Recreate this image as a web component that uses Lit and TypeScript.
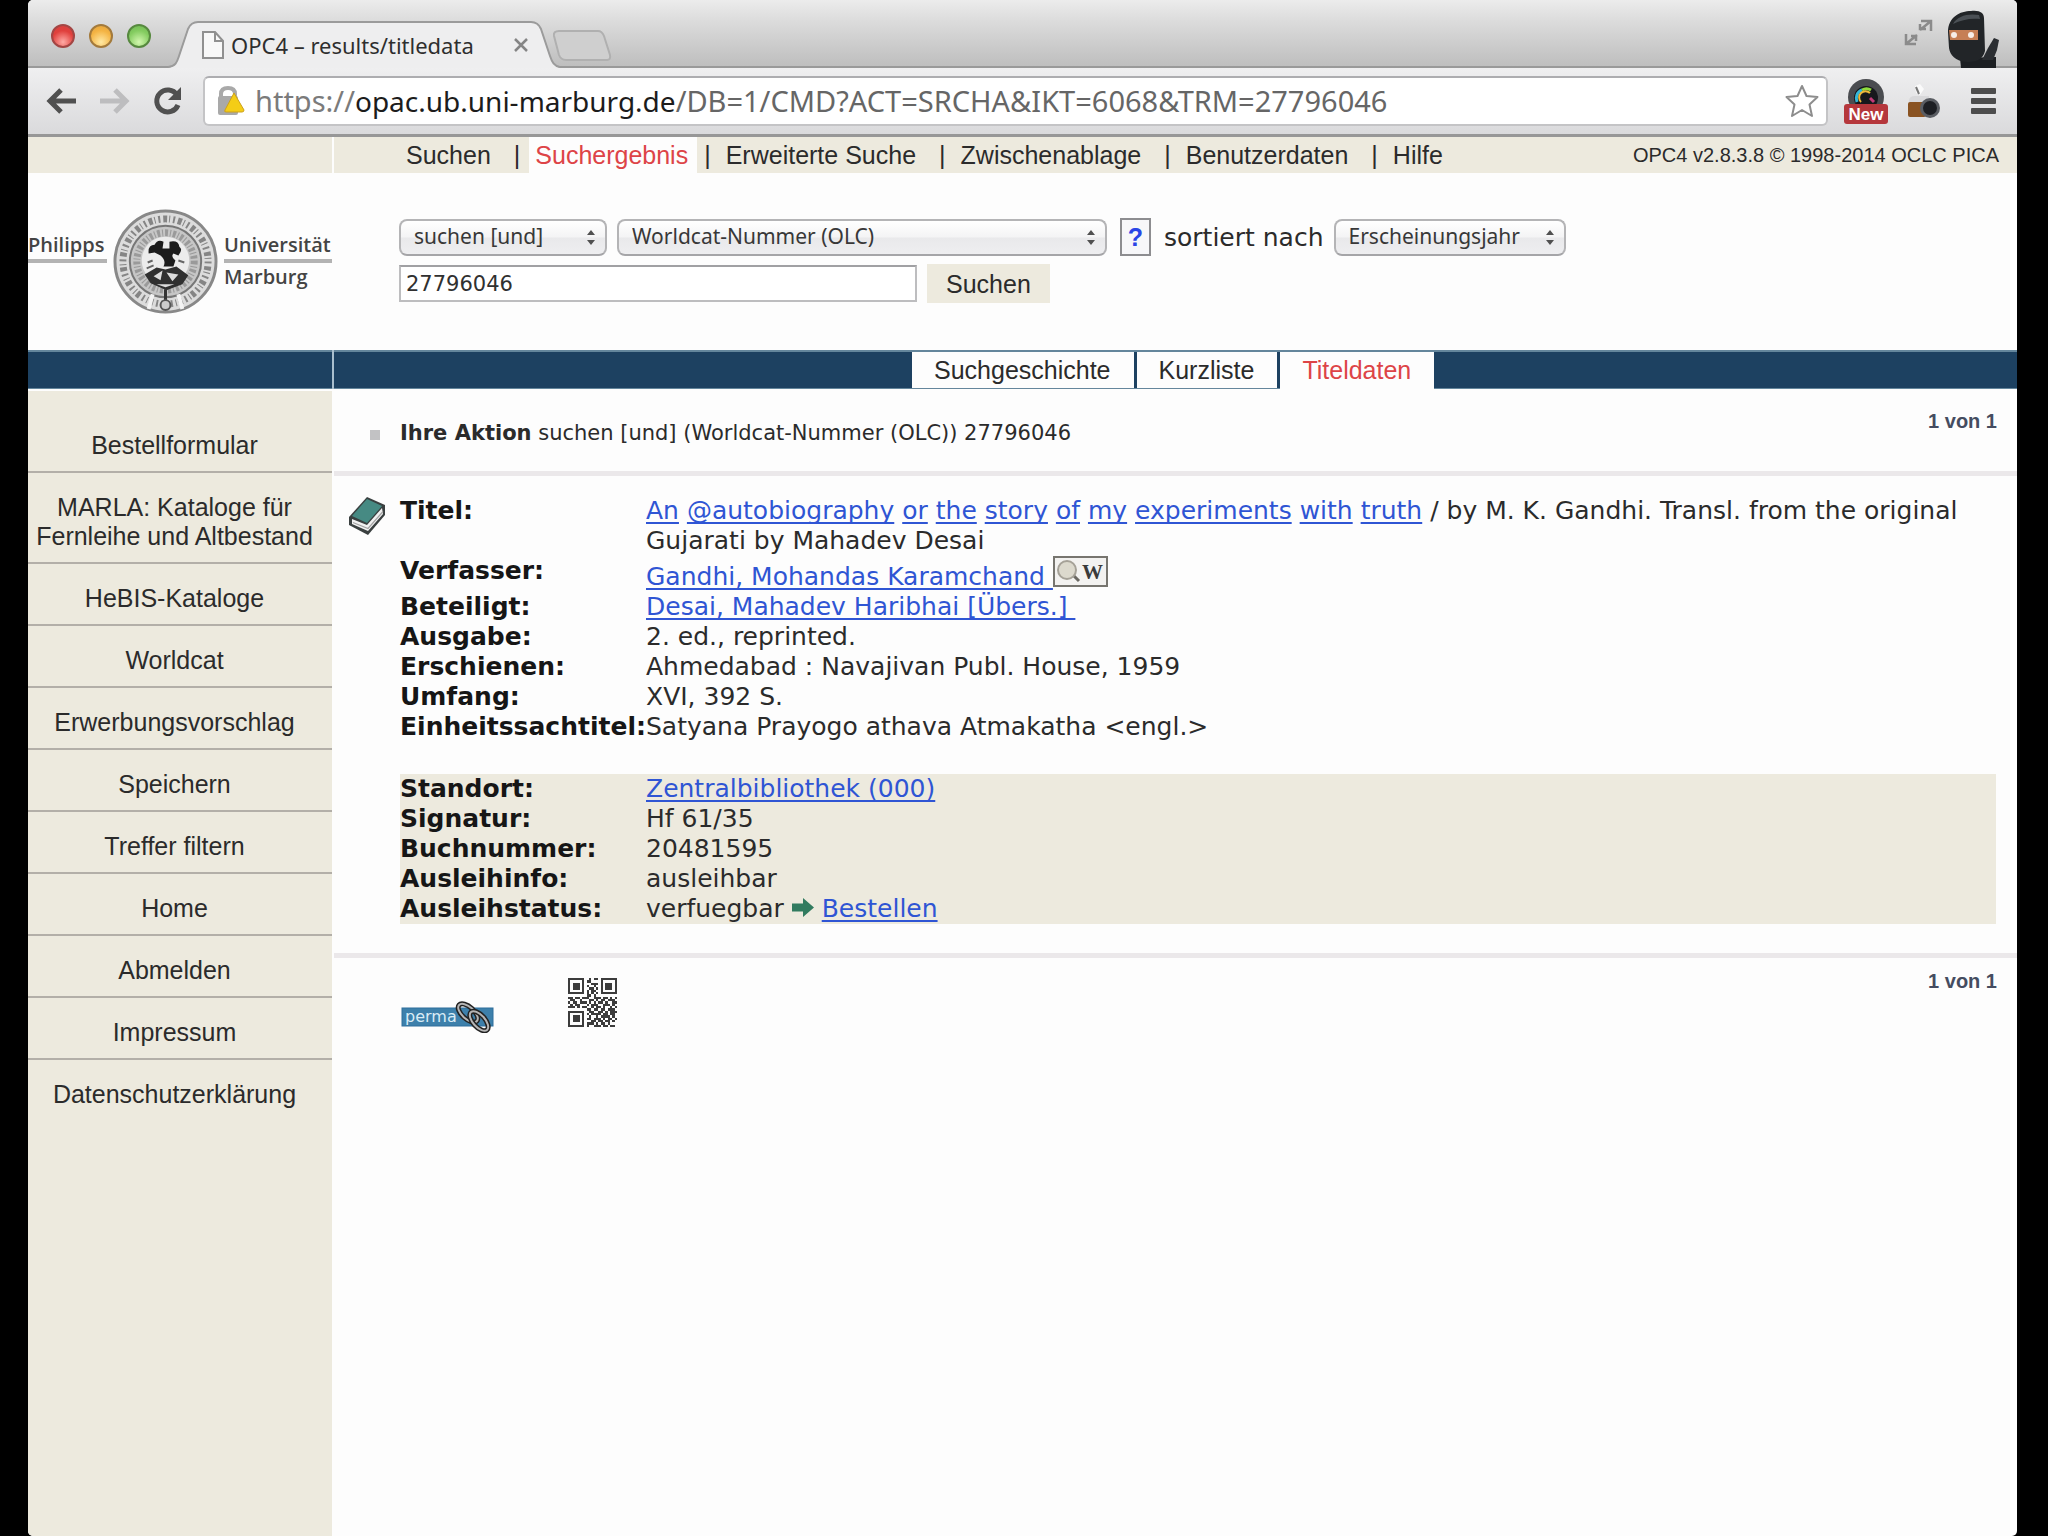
import { LitElement, html, css, svg, nothing } from "lit";
import { customElement, property } from "lit/decorators.js";
import { classMap } from "lit/directives/class-map.js";

interface Field {
  label: string;
  value: unknown;
}

const NAV = ["Suchen", "Suchergebnis", "Erweiterte Suche", "Zwischenablage", "Benutzerdaten", "Hilfe"];
const TABS = ["Suchgeschichte", "Kurzliste", "Titeldaten"];
const SIDE = [
  "Bestellformular",
  "MARLA: Kataloge für Fernleihe und Altbestand",
  "HeBIS-Kataloge",
  "Worldcat",
  "Erwerbungsvorschlag",
  "Speichern",
  "Treffer filtern",
  "Home",
  "Abmelden",
  "Impressum",
  "Datenschutzerklärung",
];
const TITLE_WORDS = ["An", "@autobiography", "or", "the", "story", "of", "my", "experiments", "with", "truth"];

const QR_ROWS = [
  "111111100101101111111",
  "100000101100001000001",
  "101110100011101011101",
  "101110101001001011101",
  "101110100110101011101",
  "100000101011001000001",
  "111111101010101111111",
  "000000001101000000000",
  "110110111001110110101",
  "011001000110101101110",
  "101101110101011010011",
  "010110001011100111010",
  "111010110010110100101",
  "000000001101101101110",
  "111111100110011010111",
  "100000101011110110110",
  "101110100100101111010",
  "101110101101110101101",
  "101110100011011011010",
  "100000101110101101000",
  "111111101001110110110",
];

const bookIcon = svg`<svg class="book" viewBox="0 0 38 40" aria-hidden="true">
  <path d="M1 21 L19 1 L37 9 L37 19 L20 39 L1 29 Z" fill="#3a4040"/>
  <path d="M4 23 L19 29 L34 12 L35 18 L20 35 L4 28 Z" fill="#f1f1f1"/>
  <path d="M5 26.500 L20 32.500 L35 15.500" fill="none" stroke="#a4a4a4" stroke-width="1.200"/>
  <path d="M4 20 L19 3 L34 10 L19 27 Z" fill="#468a83"/>
</svg>`;

const wikiIcon = svg`<svg class="wiki" viewBox="0 0 55 31" role="img" aria-label="Wikipedia">
  <rect x="1" y="1" width="53" height="29" fill="#f3f2f0" stroke="#77756f" stroke-width="2"/>
  <path d="M20 19 L26 25" stroke="#6b6862" stroke-width="3"/>
  <circle cx="14" cy="14" r="9" fill="#dcd9cd" stroke="#a5a197" stroke-width="2"/>
  <text x="29" y="23" font-family="Liberation Serif, serif" font-weight="bold" font-size="21" fill="#3a3a3a">W</text>
</svg>`;

const arrowIcon = svg`<svg class="arrow" viewBox="0 0 22 19" aria-hidden="true">
  <path d="M0 5.500 H11 V0 L22 9.500 L11 19 V13.500 H0 Z" fill="#317b5f"/>
</svg>`;

const RECORD: Field[] = [
  {
    label: "Titel:",
    value: html`${TITLE_WORDS.map((w) => html`<a href="#titel">${w}</a> `)}/ by M. K. Gandhi. Transl. from the
      original Gujarati by Mahadev Desai`,
  },
  {
    label: "Verfasser:",
    value: html`<span class="tall"><a href="#verfasser">Gandhi, Mohandas Karamchand&nbsp;</a>${wikiIcon}</span>`,
  },
  { label: "Beteiligt:", value: html`<a href="#beteiligt">Desai, Mahadev Haribhai [Übers.]&nbsp;</a>` },
  { label: "Ausgabe:", value: "2. ed., reprinted." },
  { label: "Erschienen:", value: "Ahmedabad : Navajivan Publ. House, 1959" },
  { label: "Umfang:", value: "XVI, 392 S." },
  { label: "Einheitssachtitel:", value: "Satyana Prayogo athava Atmakatha <engl.>" },
];

const HOLDINGS: Field[] = [
  { label: "Standort:", value: html`<a href="#standort">Zentralbibliothek (000)</a>` },
  { label: "Signatur:", value: "Hf 61/35" },
  { label: "Buchnummer:", value: "20481595" },
  { label: "Ausleihinfo:", value: "ausleihbar" },
  { label: "Ausleihstatus:", value: html`verfuegbar ${arrowIcon} <a href="#bestellen">Bestellen</a>` },
];

/* Window frame: tab strip and toolbar */
@customElement("browser-chrome")
class BrowserChrome extends LitElement {
  static styles = css`
    :host {
      display: block;
      font-family: "Noto Sans", "Liberation Sans", sans-serif;
    }
    button {
      display: block;
      padding: 0;
      border: 0;
      background: none;
    }
    svg {
      display: block;
    }
    .strip {
      display: flex;
      align-items: flex-end;
      height: 68px;
      padding: 0 15px 0 23px;
      box-sizing: border-box;
      background: linear-gradient(#ececec, #dcdcdc 30%, #bdbdbd);
      box-shadow: inset 0 -2px #999;
    }
    .lights {
      display: flex;
      align-self: flex-start;
      gap: 14px;
      padding-top: 24px;
      margin-right: 17px;
    }
    .light {
      width: 24px;
      height: 24px;
      border-radius: 50%;
      border: 2px solid;
      box-sizing: border-box;
    }
    .red {
      background: radial-gradient(circle at 50% 80%, #ffaaa5, #e0403c 60%, #d5403f);
      border-color: #a34644;
    }
    .yellow {
      background: radial-gradient(circle at 50% 80%, #ffe9a4, #f4b444 60%, #e3a13a);
      border-color: #a37a3c;
    }
    .green {
      background: radial-gradient(circle at 50% 80%, #d2f7ae, #84cc60 60%, #6fb852);
      border-color: #57893f;
    }
    .tab {
      position: relative;
      display: flex;
      align-items: center;
      width: 392px;
      height: 48px;
      padding: 2px 32px 0 34px;
      box-sizing: border-box;
    }
    .shape {
      position: absolute;
      inset: 0;
      width: 100%;
      height: 100%;
    }
    .title {
      position: relative;
      flex: 1;
      margin-left: 7px;
      font-size: 22px;
      line-height: 30px;
      color: #2e2e2e;
      white-space: nowrap;
    }
    .doc,
    .close {
      position: relative;
    }
    .new {
      margin: 0 auto 6px -8px;
    }
    .expand {
      margin: 0 13px 22px 0;
    }
    .toolbar {
      display: flex;
      align-items: center;
      height: 69px;
      padding: 0 21px 0 18px;
      box-sizing: border-box;
      background: linear-gradient(#efeff0, #dadadc);
      border-bottom: 3px solid #979797;
    }
    .nav {
      display: flex;
      gap: 22px;
      margin-right: 20px;
    }
    .address {
      flex: 1;
      display: flex;
      align-items: center;
      gap: 10px;
      height: 50px;
      padding: 0 6px 0 12px;
      box-sizing: border-box;
      border: 2px solid #c4c4c6;
      border-top-color: #adadb0;
      border-radius: 6px;
      background: #fff;
      font-size: 29px;
      line-height: 40px;
      color: #7b7b7b;
      white-space: nowrap;
    }
    .url {
      flex: 1;
    }
    .host {
      font-size: 28px;
      color: #1c1c1c;
    }
    .path {
      color: #666;
    }
    .extensions {
      display: flex;
      align-items: center;
      margin-left: 15px;
    }
    .camera {
      margin: 0 30px 0 18px;
    }
  `;

  render() {
    return html`
      <div class="strip">
        <div class="lights">
          <button class="light red" aria-label="Schließen"></button>
          <button class="light yellow" aria-label="Minimieren"></button>
          <button class="light green" aria-label="Maximieren"></button>
        </div>
        <div class="tab">
          <svg class="shape" viewBox="0 0 392 48" preserveAspectRatio="none">
            <path d="M0 48 C8 46 9 42 11 36 L20 9 Q23 2 30 2 H363 Q370 2 373 9 L382 36 C384 42 386 46 392 48 Z" fill="#eeeeef" />
            <path
              d="M0 47 C8 46 9 42 11 36 L20 9 Q23 2 30 2 H363 Q370 2 373 9 L382 36 C384 42 386 46 392 47"
              fill="none"
              stroke="#9b9b9b"
              stroke-width="2"
            />
          </svg>
          <svg class="doc" width="22" height="28" viewBox="0 0 22 28">
            <path d="M1 1 H13 L21 10 V27 H1 Z" fill="#f8f8f8" stroke="#909090" stroke-width="2" />
            <path d="M13 1 V10 H21" fill="none" stroke="#909090" stroke-width="2" />
          </svg>
          <span class="title">OPC4 – results/titledata</span>
          <button class="close" aria-label="Tab schließen">
            <svg width="14" height="14" viewBox="0 0 14 14">
              <path d="M1 1 L13 13 M13 1 L1 13" stroke="#858585" stroke-width="2.500" />
            </svg>
          </button>
        </div>
        <button class="new" aria-label="Neuer Tab">
          <svg width="60" height="33" viewBox="0 0 60 33">
            <path d="M7 2 H46 Q50 2 52 7 L58 26 Q59 31 55 31 H14 Q9 31 7 26 L2 7 Q1 2 7 2 Z" fill="#cfcfcf" stroke="#b0b0b0" stroke-width="2" />
          </svg>
        </button>
        <button class="expand" aria-label="Vollbild">
          <svg width="29" height="27" viewBox="0 0 29 27" fill="none" stroke="#8b8b8b" stroke-width="2.500">
            <path d="M17 2 H27 V12 M27 2 L16 11 M16 5 V10 H22" />
            <path d="M12 25 H2 V15 M2 25 L13 16 M7 17 H12 V22" />
          </svg>
        </button>
        <svg width="56" height="58" viewBox="0 0 56 58" aria-hidden="true">
          <path d="M14 48 L50 47 V58 H15 Z" fill="#1c1f22" />
          <path d="M36 50 L42 38 L48 28 L53 30 L51 40 L47 50 Z" fill="#2a2d31" />
          <path d="M2 22 C2 7 14 1 25 1 C34 0 38 3 38 8 L39 41 C37 50 29 52 21 52 C9 51 4 45 3 38 Z" fill="#222528" />
          <path d="M7 14 C11 6 22 3 33 5 L34 9 C24 8 15 10 7 14 Z" fill="#4b5055" />
          <path d="M3 20 H32 V30 H4 Z" fill="#c67f55" />
          <circle cx="8" cy="25" r="3" fill="#f7eee8" />
          <circle cx="25" cy="25" r="3" fill="#f7eee8" />
        </svg>
      </div>
      <div class="toolbar">
        <div class="nav">
          <button aria-label="Zurück">
            <svg width="31" height="28" viewBox="0 0 31 28" fill="none" stroke="#505050" stroke-width="5">
              <path d="M3 14 H30 M15 3 L4 14 L15 25" />
            </svg>
          </button>
          <button aria-label="Vorwärts">
            <svg width="31" height="28" viewBox="0 0 31 28" fill="none" stroke="#bdbdbf" stroke-width="5">
              <path d="M1 14 H28 M16 3 L27 14 L16 25" />
            </svg>
          </button>
          <button aria-label="Neu laden">
            <svg width="31" height="30" viewBox="0 0 31 30">
              <path d="M25 9 A11 11 0 1 0 26 19" fill="none" stroke="#505050" stroke-width="5" />
              <path d="M29 1 V14 H16 Z" fill="#505050" />
            </svg>
          </button>
        </div>
        <div class="address">
          <svg width="28" height="30" viewBox="0 0 28 30" aria-hidden="true">
            <path d="M4 12 V8 Q4 2 11 2 Q18 2 18 8 V12" fill="none" stroke="#a9a9a9" stroke-width="4" />
            <rect x="1" y="10" width="20" height="19" rx="2" fill="#a9a9a9" />
            <path d="M17 7 L27 24 Q27 26 25 26 H9 Q7 26 8 24 Z" fill="#f4cd16" stroke="#cda11a" />
          </svg>
          <span class="url">https://<span class="host">opac.ub.uni-marburg.de</span><span class="path">/DB=1/CMD?ACT=SRCHA&amp;IKT=6068&amp;TRM=27796046</span></span>
          <button aria-label="Lesezeichen">
            <svg width="36" height="36" viewBox="0 0 36 36">
              <path d="M18 3 L22.500 13 L33.500 14 L25.500 21.500 L28 33 L18 27 L8 33 L10.500 21.500 L2.500 14 L13.500 13 Z" fill="#fff" stroke="#8d8d8d" stroke-width="2" stroke-linejoin="round" />
            </svg>
          </button>
        </div>
        <div class="extensions">
          <button aria-label="Erweiterung">
            <svg width="46" height="48" viewBox="0 0 46 48">
              <circle cx="23" cy="20" r="18" fill="#4a4c50" />
              <circle cx="23" cy="21" r="12" fill="#17181c" />
              <path d="M14 25 A9 9 0 0 1 19 13" fill="none" stroke="#35b8d8" stroke-width="3" />
              <path d="M19 13 A9 9 0 0 1 28 13" fill="none" stroke="#8fdc3d" stroke-width="3" />
              <path d="M18 25 A6 6 0 0 1 27 16" fill="none" stroke="#f0b93a" stroke-width="2" />
              <path d="M27 21 L31 25" stroke="#c43a78" stroke-width="3" />
              <rect x="1" y="27" width="44" height="20" rx="3" fill="#b5373c" />
              <text x="23" y="43" text-anchor="middle" font-family="Liberation Sans, sans-serif" font-size="17" font-weight="bold" fill="#fff">New</text>
            </svg>
          </button>
          <button class="camera" aria-label="Kamera">
            <svg width="34" height="36" viewBox="0 0 34 36">
              <path d="M8 3 L13 1 L17 6 L13 12 L9 10 Z" fill="#fafafa" />
              <path d="M9 4 L12 11" stroke="#777" stroke-width="2" />
              <path d="M2 18 Q2 13 8 13 H22 V20 H2 Z" fill="#d8d8da" />
              <rect x="1" y="19" width="18" height="15" rx="2" fill="#8a5322" />
              <circle cx="23" cy="25" r="10" fill="#5a5d63" />
              <circle cx="23" cy="25" r="7" fill="#1d1f24" />
            </svg>
          </button>
          <button aria-label="Menü">
            <svg width="25" height="26" viewBox="0 0 25 26" fill="#4d4d4d">
              <rect width="25" height="6" rx="1" />
              <rect y="10" width="25" height="6" rx="1" />
              <rect y="20" width="25" height="6" rx="1" />
            </svg>
          </button>
        </div>
      </div>
    `;
  }
}

/* Two university name blocks on either side of the seal */
@customElement("uni-logo")
class UniLogo extends LitElement {
  static styles = css`
    :host {
      display: flex;
      gap: 6px;
      font: 600 20px/28px "Open Sans", "Noto Sans", sans-serif;
      color: #444;
    }
    .name {
      padding-top: 22px;
    }
    .rule {
      display: block;
      border-bottom: 4px solid #b3b3b3;
    }
    svg {
      display: block;
      flex: none;
      width: 105px;
      height: 105px;
    }
    .name.right {
      flex: 1;
      white-space: nowrap;
    }
    .left {
      width: 79px;
      white-space: nowrap;
    }
  `;

  render() {
    return html`
      <div class="name left"><span class="rule">Philipps</span></div>
      <svg viewBox="0 0 106 106" aria-hidden="true">
        <circle cx="53" cy="53" r="51" fill="#dcdcdc" stroke="#888" stroke-width="3" />
        <circle cx="53" cy="53" r="43" fill="none" stroke="#858585" stroke-width="7" stroke-dasharray="2 3 4 2 1 3" />
        <circle cx="53" cy="53" r="36" fill="#c6c6c6" stroke="#777" stroke-width="2" />
        <circle cx="53" cy="53" r="29" fill="none" stroke="#9a9a9a" stroke-width="7" stroke-dasharray="3 2 1 2" />
        <circle cx="53" cy="52" r="24" fill="#ececec" />
        <path d="M36 45 Q35 36 42 36 Q45 30 51 33 L50 40 L57 40 L57 33 Q66 31 67 38 Q71 41 66 47 L61 45 Q58 48 63 52 L61 58 L51 58 Q54 52 48 47 L42 44 Z" fill="#1c1c1c" />
        <path d="M32 66 L44 59 L53 61 L64 58 L76 67 L70 76 L54 82 L38 75 Z" fill="#303030" />
        <path d="M41 68 L50 62 L48 72 Z M54 64 L66 66 L60 73 Z M44 76 L62 76 L53 79 Z" fill="#dcdcdc" />
        <path d="M53 81 V97" stroke="#333" stroke-width="3" />
        <path d="M40 86 L36 101 M66 86 L70 101" stroke="#f4f4f4" stroke-width="4" />
        <circle cx="53" cy="97" r="5" fill="#ccc" stroke="#555" stroke-width="2" />
        <path d="M35 54 L40 52 M34 60 L41 57 M72 54 L66 52" stroke="#666" stroke-width="2" />
      </svg>
      <div class="name right"><span class="rule">Universität</span>Marburg</div>
    `;
  }
}

/* Pop-up menu with the small double arrow */
@customElement("pop-up")
class PopUp extends LitElement {
  @property() text = "";
  @property() name = "";
  static styles = css`
    :host {
      display: block;
      position: relative;
    }
    select {
      appearance: none;
      display: block;
      width: 100%;
      height: 37px;
      padding: 0 36px 2px 13px;
      border: 2px solid #b4b4b6;
      border-bottom-color: #a5a5a8;
      border-radius: 8px;
      background: linear-gradient(#fff, #f4f4f5 48%, #e9e9eb 52%, #eeeef0);
      font: 21px/30px "Noto Sans", "Liberation Sans", sans-serif;
      color: #383838;
    }
    svg {
      position: absolute;
      right: 11px;
      top: 11px;
      pointer-events: none;
    }
  `;
  render() {
    return html`<select aria-label=${this.name}>
        <option>${this.text}</option>
      </select>
      <svg width="10" height="15" viewBox="0 0 10 15" fill="#505050"><path d="M5 0 L9 5 H1 Z M5 15 L9 10 H1 Z" /></svg>`;
  }
}

@customElement("app-root")
class AppRoot extends LitElement {
  static styles = css`
    :host {
      display: block;
      box-sizing: border-box;
      min-height: 100vh;
      padding: 0 31px 0 28px;
      background: #000;
      color: #2b2b2b;
      font-family: "DejaVu Sans", Verdana, sans-serif;
      --beige: #edeade;
      --blue: #1d4161;
      --line: #ebe8ea;
      --sans: "Liberation Sans", Arial, sans-serif;
    }
    .window {
      display: flex;
      flex-direction: column;
      min-height: 100vh;
      overflow: hidden;
      border-radius: 5px;
      background: #fdfdfd;
    }
    a {
      color: #2f55d4;
      text-decoration-thickness: 2px;
      text-underline-offset: 3px;
      text-decoration-skip-ink: none;
    }
    .split {
      display: grid;
      grid-template-columns: 304px minmax(0, 1fr);
      column-gap: 2px;
    }
    ul {
      margin: 0;
      padding: 0;
      list-style: none;
    }
    .top {
      font: 25px/36px var(--sans);
    }
    .top-side {
      background: var(--beige);
    }
    .top-main {
      display: flex;
      justify-content: space-between;
      padding: 0 18px 0 66px;
      background: var(--beige);
    }
    .menu {
      display: flex;
    }
    .menu a,
    .tabs a,
    .side a {
      color: #2b2b2b;
      text-decoration: none;
    }
    .menu li {
      display: flex;
    }
    .menu a {
      display: block;
      padding: 0 9px 0 6px;
    }
    .sep {
      margin: 0 9px 0 14px;
    }
    .on .sep {
      margin-left: 7px;
    }
    .menu .on a,
    .tabs .on a {
      color: #dd4447;
      background: #fdfdfd;
    }
    .version {
      font-size: 20px;
    }
    .head {
      height: 177px;
    }
    .head uni-logo {
      padding-top: 36px;
    }
    .search {
      display: flex;
      flex-direction: column;
      gap: 8px;
      padding: 45px 0 0 65px;
    }
    .row {
      display: flex;
      align-items: center;
      gap: 10px;
      font-size: 25px;
    }
    .op {
      width: 208px;
    }
    .index {
      width: 490px;
    }
    .sort {
      width: 232px;
    }
    .help {
      width: 31px;
      height: 38px;
      margin: 0 3px;
      padding: 0;
      border: 2px solid #8d8d90;
      background: #f7f7f9;
      font: bold 25px/30px var(--sans);
      color: #2a45e6;
    }
    .term {
      width: 518px;
      height: 37px;
      box-sizing: border-box;
      padding: 0 5px;
      border: 2px solid #bdbdbf;
      border-top-color: #a0a0a3;
      background: #fff;
      font: 21px/30px "DejaVu Sans", sans-serif;
      color: #303030;
    }
    .go {
      height: 39px;
      padding: 0 19px;
      border: 0;
      background: var(--beige);
      font: 25px/36px var(--sans);
      color: #2b2b2b;
    }
    .bar {
      background: #a9bfce;
      font: 25px/36px var(--sans);
    }
    .bar-side,
    .tabs {
      border: 1px solid #64869c;
      border-width: 2px 0 1px;
      background: var(--blue);
    }
    .tabs {
      display: flex;
      gap: 3px;
      padding-left: 578px;
    }
    .tabs a {
      display: block;
      padding: 0 23px 0 22px;
      background: #fdfdfd;
    }
    .tabs .on {
      margin-bottom: -1px;
      background: #fdfdfd;
    }
    .body {
      flex: 1;
      padding-top: 2px;
    }
    .side {
      padding-top: 20px;
      background: var(--beige);
      font: 25px/29px var(--sans);
      text-align: center;
    }
    .side a {
      display: block;
      padding: 20px 15px 11px 4px;
    }
    .side li + li {
      border-top: 2px solid #b3afa8;
    }
    .action {
      display: flex;
      align-items: flex-start;
      height: 85px;
      box-sizing: border-box;
      padding: 27px 20px 0 36px;
      border-bottom: 5px solid var(--line);
      font-size: 21px;
      line-height: 30px;
    }
    .bullet {
      flex: none;
      width: 10px;
      height: 10px;
      margin: 12px 20px 0 0;
      background: #c2c2c4;
    }
    .count {
      margin: -12px 0 0 auto;
      font: bold 20px/30px var(--sans);
      color: #454c60;
    }
    .record {
      display: flex;
      align-items: flex-start;
      gap: 14px;
      padding: 20px 21px 29px 14px;
      border-bottom: 5px solid var(--line);
    }
    .book {
      flex: none;
      width: 38px;
      height: 40px;
    }
    .tables {
      flex: 1;
      min-width: 0;
    }
    table {
      width: 100%;
      table-layout: fixed;
      border-collapse: collapse;
      font-size: 25px;
      line-height: 30px;
    }
    th {
      width: 246px;
      padding: 0;
      text-align: left;
      vertical-align: top;
      white-space: nowrap;
      color: #161616;
    }
    td {
      padding: 0;
      vertical-align: top;
    }
    .tall {
      display: flex;
      align-items: flex-end;
      height: 36px;
    }
    .wiki {
      width: 55px;
      height: 31px;
      align-self: flex-start;
    }
    .arrow {
      width: 22px;
      height: 19px;
    }
    .holdings {
      margin-top: 32px;
      background: var(--beige);
    }
    .foot {
      display: flex;
      align-items: flex-start;
      padding: 20px 20px 0 67px;
    }
    .perma {
      width: 93px;
      height: 32px;
      padding-top: 23px;
      margin-right: 74px;
    }
    .qr {
      width: 49px;
      height: 49px;
    }
  `;

  private renderTable(fields: Field[], cls: string) {
    return html`<table class=${cls}>
      <tbody>
        ${fields.map((f) => html`<tr><th scope="row">${f.label}</th><td>${f.value}</td></tr>`)}
      </tbody>
    </table>`;
  }

  render() {
    return html`
      <div class="window">
        <browser-chrome></browser-chrome>
        <div class="split top">
          <div class="top-side"></div>
          <div class="top-main">
            <ul class="menu">
              ${NAV.map(
                (n, i) => html`<li class=${classMap({ on: n === "Suchergebnis" })}>
                  <a href="#nav">${n}</a>${i < NAV.length - 1 ? html`<span class="sep">|</span>` : nothing}
                </li>`
              )}
            </ul>
            <span class="version">OPC4 v2.8.3.8 © 1998-2014 OCLC PICA</span>
          </div>
        </div>
        <div class="split head">
          <uni-logo></uni-logo>
          <form class="search">
            <div class="row">
              <pop-up class="op" name="Operator" text="suchen [und]"></pop-up>
              <pop-up class="index" name="Suchschlüssel" text="Worldcat-Nummer (OLC)"></pop-up>
              <button class="help" type="button">?</button>
              <span>sortiert nach</span>
              <pop-up class="sort" name="sortiert nach" text="Erscheinungsjahr"></pop-up>
            </div>
            <div class="row">
              <input class="term" type="text" aria-label="Suchbegriff" value="27796046" />
              <button class="go" type="button">Suchen</button>
            </div>
          </form>
        </div>
        <div class="split bar">
          <div class="bar-side"></div>
          <ul class="tabs">
            ${TABS.map((t) => html`<li class=${classMap({ on: t === "Titeldaten" })}><a href="#tab">${t}</a></li>`)}
          </ul>
        </div>
        <div class="split body">
          <ul class="side">
            ${SIDE.map((s) => html`<li><a href="#side">${s}</a></li>`)}
          </ul>
          <main>
            <div class="action">
              <span class="bullet"></span>
              <span><b>Ihre Aktion</b> suchen [und] (Worldcat-Nummer (OLC)) 27796046</span>
              <span class="count">1 von 1</span>
            </div>
            <div class="record">
              ${bookIcon}
              <div class="tables">${this.renderTable(RECORD, "data")}${this.renderTable(HOLDINGS, "holdings")}</div>
            </div>
            <div class="foot">
              <svg class="perma" viewBox="0 0 93 32" role="img" aria-label="Permalink">
                <rect x="1" y="7" width="91" height="18" fill="#3d80ab" stroke="#2f6f9c" />
                <text x="4" y="21" font-family="DejaVu Sans, sans-serif" font-size="16" fill="#d9ecf6">perma</text>
                <g fill="none">
                  <ellipse cx="67" cy="12" rx="12" ry="6" transform="rotate(42 67 12)" stroke="#222" stroke-width="5" />
                  <ellipse cx="67" cy="12" rx="12" ry="6" transform="rotate(42 67 12)" stroke="#b5b5b5" stroke-width="2" />
                  <ellipse cx="78" cy="20" rx="12" ry="6" transform="rotate(48 78 20)" stroke="#222" stroke-width="5" />
                  <ellipse cx="78" cy="20" rx="12" ry="6" transform="rotate(48 78 20)" stroke="#b5b5b5" stroke-width="2" />
                </g>
              </svg>
              <svg class="qr" viewBox="0 0 21 21" role="img" aria-label="QR-Code" shape-rendering="crispEdges">
                ${QR_ROWS.map((r, y) => [...r].map((c, x) => (c === "1" ? svg`<rect x=${x} y=${y} width="1" height="1" fill="#3c3c3c"/>` : nothing)))}
              </svg>
              <span class="count">1 von 1</span>
            </div>
          </main>
        </div>
      </div>
    `;
  }
}
